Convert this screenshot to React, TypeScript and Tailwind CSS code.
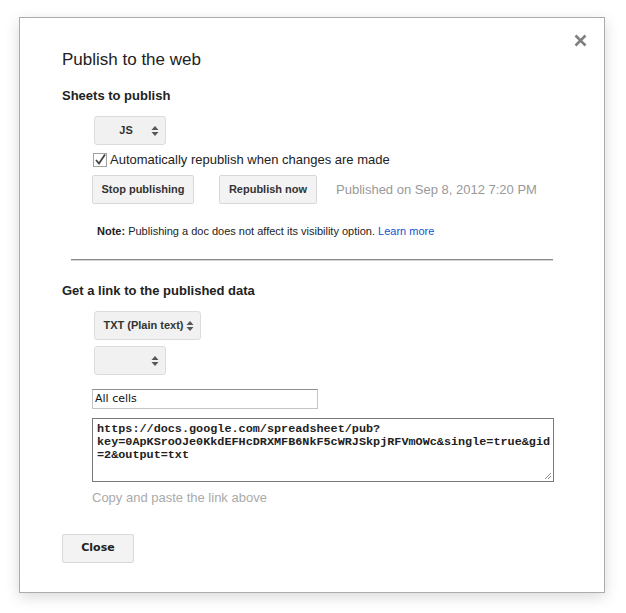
import React from "react";

const Arrows = () => (
  <svg width="8" height="12" viewBox="0 0 8 12" className="shrink-0">
    <path d="M4 1 L7.5 5 L0.5 5 Z" fill="#555" />
    <path d="M4 11 L7.5 7 L0.5 7 Z" fill="#555" />
  </svg>
);

function Select({ label, w, h }: { label: string; w: string; h: string }) {
  return (
    <div
      className={`${w} ${h} flex items-center justify-end rounded-[3px] border border-[#dcdcdc] bg-[#f1f1f1] pr-[6px] text-[11px] font-bold text-[#333]`}
    >
      <span className="flex-1 text-center pl-[8px] pr-[2px]">{label}</span>
      <Arrows />
    </div>
  );
}

function Btn({ label, w }: { label: string; w: string }) {
  return (
    <div
      className={`${w} h-[29px] flex items-center justify-center rounded-[2px] border border-[#d8d8d8] bg-[#f3f3f3] text-[11px] font-bold text-[#333]`}
    >
      {label}
    </div>
  );
}

export default function App() {
  return (
    <div className="w-[626px] h-[613px] bg-white pt-[17px] pl-[19px]" style={{ fontFamily: "'Liberation Sans', Arial, sans-serif" }}>
      <div className="relative w-[586px] h-[576px] border border-[#acacac] bg-white shadow-[0_4px_14px_rgba(0,0,0,0.15)] pl-[42px] pt-[32px]">
        <svg width="13" height="13" viewBox="0 0 13 13" className="absolute right-[17px] top-[16px]">
          <path d="M1.5 1.5 L11.5 11.5 M11.5 1.5 L1.5 11.5" stroke="#808080" strokeWidth="2.6" />
        </svg>
        <div className="text-[17px] leading-[20px] text-[#222]">Publish to the web</div>
        <div className="mt-[18px] text-[13px] leading-[16px] font-bold text-[#222]">Sheets to publish</div>
        <div className="mt-[12px] ml-[32px]">
          <Select label="JS" w="w-[72px]" h="h-[29px]" />
        </div>
        <div className="mt-[7px] ml-[31px] flex items-center h-[16px]">
          <svg width="14" height="14" viewBox="0 0 14 14" className="shrink-0">
            <rect x="0.5" y="0.5" width="13" height="13" fill="#fff" stroke="#a0a0a0" />
            <path d="M3 7 L6 10.5 L12 1.5" fill="none" stroke="#444" strokeWidth="1.8" />
          </svg>
          <span className="ml-[3px] text-[13px] text-[#222]">Automatically republish when changes are made</span>
        </div>
        <div className="mt-[7px] ml-[30px] flex items-center">
          <Btn label="Stop publishing" w="w-[102px]" />
          <div className="ml-[25px]">
            <Btn label="Republish now" w="w-[98px]" />
          </div>
          <span className="ml-[19px] text-[13px] text-[#999]">Published on Sep 8, 2012 7:20 PM</span>
        </div>
        <div className="mt-[20px] ml-[35px] text-[11px] leading-[14px] text-[#222]">
          <span className="font-bold">Note:</span> Publishing a doc does not affect its visibility option.{" "}
          <span className="text-[#1155cc]">Learn more</span>
        </div>
        <div className="mt-[21px] ml-[9px] w-[482px] border-t border-[#8a8a8a] border-b border-b-[#d4d4d4]" />
        <div className="mt-[22px] text-[13px] leading-[16px] font-bold text-[#222]">Get a link to the published data</div>
        <div className="mt-[12px] ml-[32px]">
          <Select label="TXT (Plain text)" w="w-[107px]" h="h-[29px]" />
        </div>
        <div className="mt-[6px] ml-[32px]">
          <Select label="" w="w-[72px]" h="h-[29px]" />
        </div>
        <div className="mt-[14px] ml-[30px] w-[226px] h-[20px] border border-[#c4c4c4] border-t-[#8e8e8e] flex items-center pl-[2px] text-[#111]" style={{ fontFamily: "'DejaVu Sans', sans-serif", fontSize: "11px" }}>
          All cells
        </div>
        <div className="relative mt-[9px] ml-[30px] w-[462px] h-[64px] border border-[#7a7a7a] px-[4px] pt-[4px] text-[11.8px] leading-[13px] font-bold text-[#222] whitespace-nowrap overflow-hidden" style={{ fontFamily: "'Liberation Mono', 'Courier New', monospace" }}>
          https://docs.google.com/spreadsheet/pub?<br />
          key=0ApKSroOJe0KkdEFHcDRXMFB6NkF5cWRJSkpjRFVmOWc&amp;single=true&amp;gid<br />
          =2&amp;output=txt
          <svg width="8" height="8" viewBox="0 0 8 8" className="absolute right-[1px] bottom-[1px]">
            <path d="M7 1 L1 7 M7 4 L4 7" stroke="#888" strokeWidth="1" />
          </svg>
        </div>
        <div className="mt-[8px] ml-[30px] text-[13px] leading-[16px] text-[#aaa]">Copy and paste the link above</div>
        <div className="mt-[28px] w-[72px] h-[29px] flex items-center justify-center rounded-[2px] border border-[#d8d8d8] bg-[#f3f3f3] font-bold text-[#222]" style={{ fontFamily: "'DejaVu Sans', sans-serif", fontSize: "11px" }}>
          Close
        </div>
      </div>
    </div>
  );
}
